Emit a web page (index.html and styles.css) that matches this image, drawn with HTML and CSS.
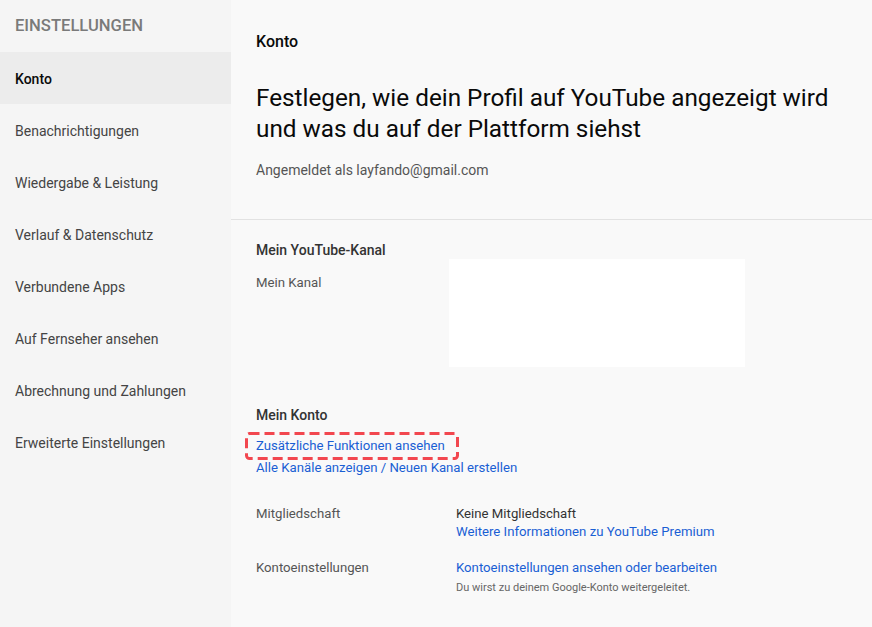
FILE: index.html
```html
<!DOCTYPE html>
<html lang="de">
<head>
<meta charset="utf-8">
<title>Einstellungen</title>
<link rel="stylesheet" href="styles.css">
</head>
<body>
<div class="page">
  <nav class="sidebar">
    <div class="side-title">EINSTELLUNGEN</div>
    <a class="side-item active">Konto</a>
    <a class="side-item">Benachrichtigungen</a>
    <a class="side-item">Wiedergabe &amp; Leistung</a>
    <a class="side-item">Verlauf &amp; Datenschutz</a>
    <a class="side-item">Verbundene Apps</a>
    <a class="side-item">Auf Fernseher ansehen</a>
    <a class="side-item">Abrechnung und Zahlungen</a>
    <a class="side-item">Erweiterte Einstellungen</a>
  </nav>
  <main class="main">
    <section class="intro">
      <div class="crumb">Konto</div>
      <h1 class="title">Festlegen, wie dein Profil auf YouTube angezeigt wird und was du auf der Plattform siehst</h1>
      <div class="signed">Angemeldet als layfando@gmail.com</div>
    </section>
    <section class="body">
      <h2 class="sec-head">Mein YouTube-Kanal</h2>
      <div class="row channel-row">
        <div class="label channel-label">Mein Kanal</div>
        <div class="channel-box"></div>
      </div>
      <h2 class="sec-head konto-head">Mein Konto</h2>
      <div class="links">
        <a class="link hl">Zusätzliche Funktionen ansehen<svg class="dash" width="214" height="28" viewBox="0 0 214 28"><rect x="1.5" y="1.5" width="211" height="25" rx="3" ry="3" fill="none" stroke="#f2474f" stroke-width="3" stroke-dasharray="10 5"/></svg></a>
        <a class="link">Alle Kanäle anzeigen / Neuen Kanal erstellen</a>
      </div>
      <div class="row member-row">
        <div class="label">Mitgliedschaft</div>
        <div class="value">
          <div class="plain">Keine Mitgliedschaft</div>
          <a class="link tight">Weitere Informationen zu YouTube Premium</a>
        </div>
      </div>
      <div class="row account-row">
        <div class="label">Kontoeinstellungen</div>
        <div class="value">
          <a class="link">Kontoeinstellungen ansehen oder bearbeiten</a>
          <div class="note">Du wirst zu deinem Google-Konto weitergeleitet.</div>
        </div>
      </div>
    </section>
  </main>
</div>
</body>
</html>
```
FILE: styles.css
```css
* { box-sizing: border-box; }
html, body { margin: 0; padding: 0; }
body {
  font-family: Roboto, "Noto Sans", Arial, sans-serif;
  font-size: 14px;
  color: #030303;
  background: #f9f9f9;
  width: 872px;
  height: 627px;
  overflow: hidden;
}
.page {
  display: flex;
  height: 627px;
}
.sidebar {
  width: 231px;
  flex: none;
  background: #f5f5f5;
  display: flex;
  flex-direction: column;
}
.side-title {
  height: 52px;
  padding-top: 2px;
  line-height: 48px;
  padding-left: 15px;
  font-size: 16.6px;
  font-weight: 500;
  color: #7a7a7a;
}
.side-item {
  display: block;
  height: 52px;
  padding-top: 2px;
  line-height: 50px;
  padding-left: 15px;
  font-size: 14px;
  color: #444;
}
.side-item.active {
  background: #ececec;
  color: #0a0a0a;
  font-weight: 500;
}
.main {
  flex: 1;
  background: #f9f9f9;
}
.intro {
  padding: 32px 25px 0 25px;
  height: 220px;
  border-bottom: 1px solid #e2e2e2;
}
.crumb {
  font-size: 16px;
  font-weight: 500;
  line-height: 20px;
  color: #0a0a0a;
}
.title {
  margin: 30px 0 0 0;
  font-size: 24.3px;
  font-weight: 400;
  line-height: 31px;
  color: #0a0a0a;
}
.signed {
  margin-top: 16px;
  font-size: 14px;
  line-height: 20px;
  color: #555;
}
.body {
  padding: 20px 25px 0 25px;
}
.sec-head {
  margin: 0;
  font-size: 14px;
  font-weight: 500;
  line-height: 20px;
  color: #333;
}
.row {
  display: flex;
  align-items: flex-start;
}
.label {
  width: 200px;
  flex: none;
  font-size: 13.2px;
  line-height: 20px;
  color: #555;
}
.channel-row {
  margin-top: -1px;
}
.channel-label {
  width: 193px;
  padding-top: 14px;
}
.channel-box {
  width: 296px;
  height: 108px;
  background: #ffffff;
}
.konto-head {
  margin-top: 38px;
}
.links {
  margin-top: 11px;
  display: flex;
  flex-direction: column;
}
.link {
  display: block;
  font-size: 13.2px;
  line-height: 20px;
  color: #1a5fd4;
  text-decoration: none;
}
.links .link + .link {
  margin-top: 2px;
}
.hl {
  position: relative;
  align-self: flex-start;
}
.dash {
  position: absolute;
  left: -11px;
  top: -4px;
  display: block;
}
.member-row {
  margin-top: 26px;
}
.value {
  display: flex;
  flex-direction: column;
}
.plain {
  font-size: 13.2px;
  line-height: 20px;
  color: #333;
}
.tight {
  line-height: 18px;
  margin-top: -1px;
}
.account-row {
  margin-top: 17px;
}
.note {
  margin-top: 1px;
  font-size: 11px;
  line-height: 18px;
  color: #666;
}
```
